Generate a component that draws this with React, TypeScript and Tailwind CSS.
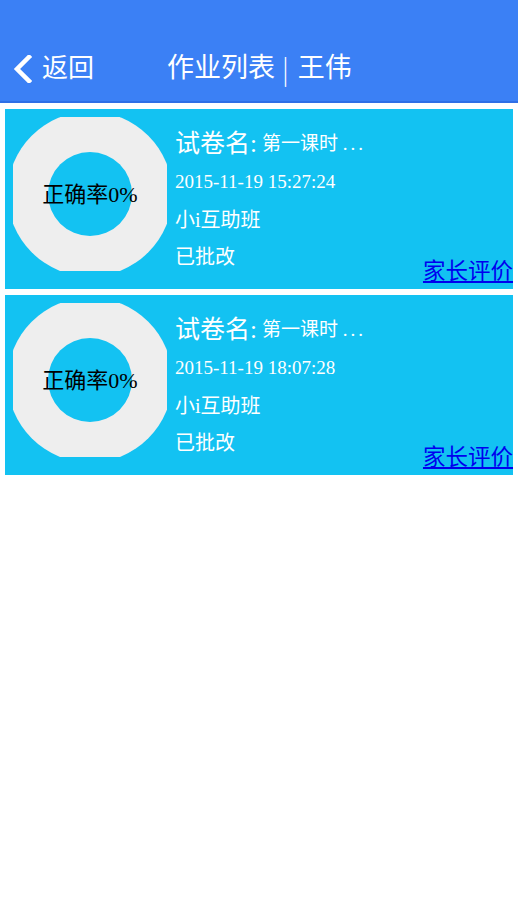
import React from "react";

const records = [
  { time: "2015-11-19 15:27:24" },
  { time: "2015-11-19 18:07:28" },
];

const serif = { fontFamily: '"Liberation Serif", "Noto Sans CJK SC", serif' };
const sans = { fontFamily: '"Liberation Sans", "Noto Sans CJK SC", sans-serif' };

const Donut = () => (
  <div className="relative w-[154px] h-[154px] shrink-0">
    <svg width="154" height="154" viewBox="0 0 154 154">
      <circle cx="77" cy="77" r="82.5" fill="#eeeeee" />
      <circle cx="77" cy="77" r="42" fill="#13c2f2" />
    </svg>
    <div
      className="absolute inset-0 flex items-center justify-center text-[22px] text-black"
      style={serif}
    >
      正确率0%
    </div>
  </div>
);

const RecordCard = ({ time }: { time: string }) => (
  <div className="mx-[5px] mt-[6px] h-[180px] bg-[#13c2f2] flex" style={serif}>
    <div className="pl-[8px] pt-[8px]">
      <Donut />
    </div>
    <div className="flex-1 pl-[8px] pt-[15px] text-white flex flex-col whitespace-nowrap">
      <div className="h-[40px] flex items-center">
        <span className="text-[25px]">试卷名:</span>
        <span className="text-[19px] ml-[5px]">
          第一课时 <span className="tracking-[3px]">...</span>
        </span>
      </div>
      <div className="h-[37px] flex items-center text-[19px]">{time}</div>
      <div className="h-[37px] flex items-center text-[20px]">小i互助班</div>
      <div className="h-[37px] flex items-center text-[20px]">已批改</div>
    </div>
    <a
      href="#"
      className="self-end mb-[4px] text-[22.5px] leading-[26px] text-[#0000ee] underline whitespace-nowrap"
    >
      家长评价
    </a>
  </div>
);

const App = () => {
  return (
    <div className="w-[518px] min-h-[920px] bg-white">
      <div
        className="h-[103px] bg-[#3b80f5] border-b-2 border-[#2f6fe6] flex items-center pt-[36px] text-white"
        style={sans}
      >
        <div className="flex items-center pl-[12px] w-[167px]">
          <svg width="20" height="28" viewBox="0 0 20 28" fill="none">
            <path d="M17 2 L5 14 L17 26" stroke="white" strokeWidth="4.5" strokeLinecap="square" />
          </svg>
          <span className="ml-[10px] text-[26px]">返回</span>
        </div>
        <div className="text-[27px] flex items-center">
          <span>作业列表</span>
          <span
            className="ml-[7px] mr-[9px] font-light"
            style={{ fontFamily: '"Noto Sans CJK SC", sans-serif' }}
          >
            |
          </span>
          <span>王伟</span>
        </div>
      </div>
      <div>
        {records.map((r, i) => (
          <RecordCard key={i} time={r.time} />
        ))}
      </div>
    </div>
  );
};

export default App;
